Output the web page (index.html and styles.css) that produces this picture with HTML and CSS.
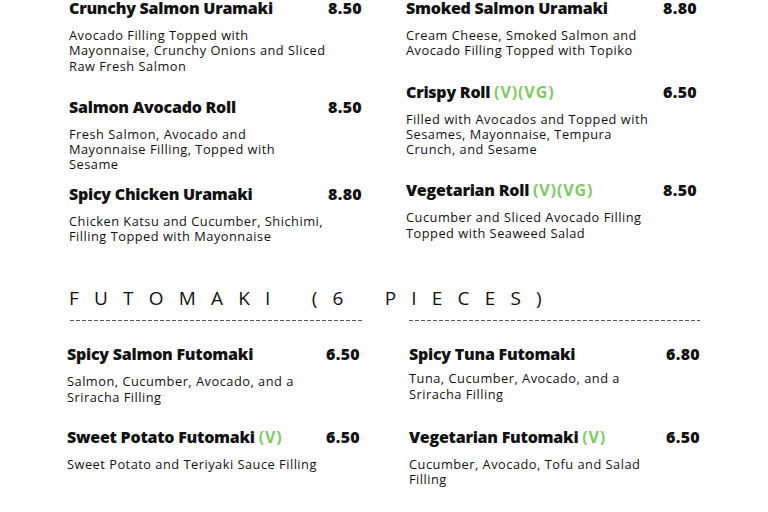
FILE: index.html
```html
<!DOCTYPE html>
<html lang="en">
<head>
<meta charset="utf-8">
<title>Menu</title>
<link rel="stylesheet" href="styles.css">
</head>
<body>
<main class="menu">
  <section class="grid top">
    <div class="col">
      <article class="item">
        <div class="head"><h3>Crunchy Salmon Uramaki</h3><span class="price">8.50</span></div>
        <p>Avocado Filling Topped with<br>Mayonnaise, Crunchy Onions and Sliced<br>Raw Fresh Salmon</p>
      </article>
      <article class="item">
        <div class="head"><h3>Salmon Avocado Roll</h3><span class="price">8.50</span></div>
        <p>Fresh Salmon, Avocado and<br>Mayonnaise Filling, Topped with<br>Sesame</p>
      </article>
      <article class="item tight">
        <div class="head"><h3>Spicy Chicken Uramaki</h3><span class="price">8.80</span></div>
        <p>Chicken Katsu and Cucumber, Shichimi,<br>Filling Topped with Mayonnaise</p>
      </article>
    </div>
    <div class="col">
      <article class="item">
        <div class="head"><h3>Smoked Salmon Uramaki</h3><span class="price">8.80</span></div>
        <p>Cream Cheese, Smoked Salmon and<br>Avocado Filling Topped with Topiko</p>
      </article>
      <article class="item">
        <div class="head"><h3>Crispy Roll <span class="tag">(V)(VG)</span></h3><span class="price">6.50</span></div>
        <p>Filled with Avocados and Topped with<br>Sesames, Mayonnaise, Tempura<br>Crunch, and Sesame</p>
      </article>
      <article class="item">
        <div class="head"><h3>Vegetarian Roll <span class="tag">(V)(VG)</span></h3><span class="price">8.50</span></div>
        <p>Cucumber and Sliced Avocado Filling<br>Topped with Seaweed Salad</p>
      </article>
    </div>
  </section>

  <h2 class="section-title">FUTOMAKI (6 PIECES)</h2>
  <div class="rules"><span class="rule"></span><span class="rule"></span></div>

  <section class="grid bottom">
    <div class="col">
      <article class="item">
        <div class="head"><h3>Spicy Salmon Futomaki</h3><span class="price">6.50</span></div>
        <p>Salmon, Cucumber, Avocado, and a<br>Sriracha Filling</p>
      </article>
      <article class="item">
        <div class="head"><h3>Sweet Potato Futomaki <span class="tag">(V)</span></h3><span class="price">6.50</span></div>
        <p>Sweet Potato and Teriyaki Sauce Filling</p>
      </article>
    </div>
    <div class="col">
      <article class="item snug">
        <div class="head"><h3>Spicy Tuna Futomaki</h3><span class="price">6.80</span></div>
        <p>Tuna, Cucumber, Avocado, and a<br>Sriracha Filling</p>
      </article>
      <article class="item loose">
        <div class="head"><h3>Vegetarian Futomaki <span class="tag">(V)</span></h3><span class="price">6.50</span></div>
        <p>Cucumber, Avocado, Tofu and Salad<br>Filling</p>
      </article>
    </div>
  </section>
</main>
</body>
</html>
```

FILE: styles.css
```css
* { box-sizing: border-box; }
html, body { margin: 0; padding: 0; background: #fff; }
body {
  font-family: "Open Sans", "DejaVu Sans", sans-serif;
  color: #111;
  width: 768px;
  height: 512px;
  overflow: hidden;
}
.menu { padding: 0 0 0 69px; margin-top: -2px; }
.grid {
  display: grid;
  grid-template-columns: 293px 291px;
  column-gap: 44px;
}
.col { display: flex; flex-direction: column; gap: 23px; }
.item { display: flex; flex-direction: column; gap: 10px; }
.item.tight { margin-top: -12px; }
.head {
  display: flex;
  justify-content: space-between;
  align-items: center;
  height: 20px;
}
h3 {
  margin: 0;
  font-size: 16px;
  font-weight: 800;
  line-height: 20px;
  letter-spacing: -0.25px;
  white-space: nowrap;
}
.price {
  font-size: 16px;
  font-weight: 800;
  line-height: 20px;
  letter-spacing: 0.3px;
}
.tag { color: #7dcb63; font-weight: 700; letter-spacing: 0.9px; }
p {
  margin: 0;
  font-size: 12.8px;
  line-height: 15.3px;
  letter-spacing: 0.5px;
  white-space: nowrap;
}
.section-title {
  margin: 41px 0 0 0;
  font-size: 19px;
  font-weight: 400;
  line-height: 26px;
  letter-spacing: 15.2px;
  word-spacing: 6px;
}
.rules {
  display: grid;
  grid-template-columns: 292px 291px;
  column-gap: 47px;
  margin: 9px 0 0 1px;
}
.rule {
  height: 1px;
  background: repeating-linear-gradient(90deg, #555 0 4px, transparent 4px 6px);
}
.bottom {
  margin: 23px 0 0 -2px;
  grid-template-columns: 293px 291px;
  column-gap: 49px;
}
.bottom .col { gap: 22px; }
.item.snug { gap: 7px; }
.item.loose { margin-top: 3px; }
```
